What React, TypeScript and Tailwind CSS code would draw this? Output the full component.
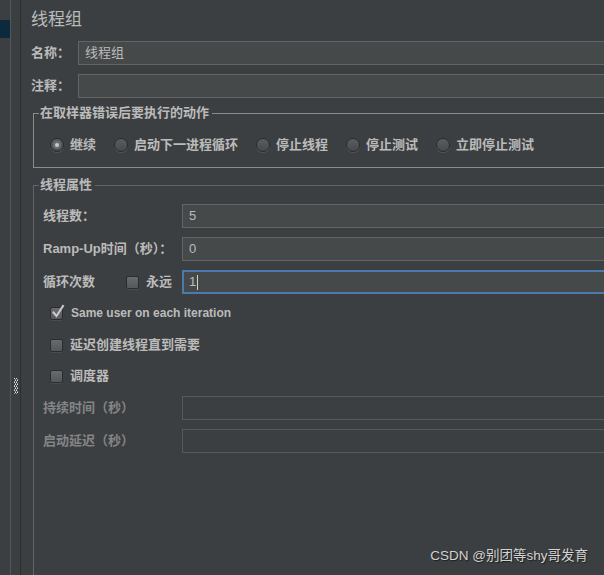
import React from 'react';

function Radio({ checked = false }: { checked?: boolean }) {
  return (
    <span className="w-[14px] h-[14px] rounded-full border border-[#2a2c2e] bg-linear-to-b from-[#5a5e61] to-[#474a4d] shadow-[0_1px_0_#55585a] flex items-center justify-center shrink-0">
      {checked && (
        <span className="w-[8px] h-[8px] rounded-full bg-[#6a6d6f] flex items-center justify-center">
          <span className="w-[4px] h-[4px] rounded-full bg-[#c8c8c8]" />
        </span>
      )}
    </span>
  );
}

function Check({ checked = false }: { checked?: boolean }) {
  return (
    <span className="relative w-[13px] h-[13px] rounded-[2px] border border-[#2a2c2e] bg-linear-to-b from-[#686b6e] to-[#55585b] shadow-[0_1px_0_#4a4d50] shrink-0">
      {checked && (
        <svg className="absolute -top-[4px] left-[0px]" width="14" height="15" viewBox="0 0 14 15">
          <path d="M2.5 8.5 L5.5 12 L12 2" stroke="#c9c9c9" strokeWidth="2" fill="none" strokeLinecap="square" />
        </svg>
      )}
    </span>
  );
}

function Field({ value, variant = 'normal' }: { value?: React.ReactNode; variant?: 'normal' | 'focused' | 'disabled' }) {
  const cls =
    variant === 'focused'
      ? 'border-2 border-[#4d7aad] bg-[#45494a] pl-[5px]'
      : variant === 'disabled'
        ? 'border border-[#57595b] bg-transparent pl-[6px]'
        : 'border border-[#646464] bg-[#45494a] pl-[6px]';
  return (
    <div className={`flex-1 -mr-[20px] h-[24px] flex items-center text-[13px] text-[#bbbbbb] ${cls}`}>
      {value}
    </div>
  );
}

function Group({ title, line, children, className = '' }: {
  title: string;
  line: string;
  children: React.ReactNode;
  className?: string;
}) {
  return (
    <div className={`flex flex-col -mr-[20px] ${className}`}>
      <div className="flex items-center h-[16px]">
        <span className={`self-end w-[6px] h-[8px] border-t border-l ${line}`} />
        <span className="px-[1px] text-[13px] leading-[16px] font-bold text-[#bbbbbb]">{title}</span>
        <span className={`flex-1 ml-[2px] border-t ${line}`} />
      </div>
      {children}
    </div>
  );
}

const RADIOS = ['继续', '启动下一进程循环', '停止线程', '停止测试', '立即停止测试'];

export default function App() {
  return (
    <div className='relative w-[604px] h-[575px] overflow-hidden bg-[#3c3f41] flex font-[family-name:"Liberation_Sans","Noto_Sans_CJK_SC",sans-serif]'>
      {/* Tree strip */}
      <div className="w-[11px] border-r border-[#55585a] shrink-0">
        <div className="mt-[20px] h-[18px] bg-[#0d293e]" />
      </div>

      {/* Splitter */}
      <div className="w-[10px] border-r border-[#2c2e30] shrink-0 pt-[378px] pl-[3px]">
        <svg width="4" height="16" viewBox="0 0 4 16">
          {Array.from({ length: 8 }).map((_, i) => (
            <g key={i}>
              <rect x={i % 2 ? 1 : 0} y={i * 2} width="1" height="1" fill="#e0e0e0" />
              <rect x={i % 2 ? 3 : 2} y={i * 2} width="1" height="1" fill="#e0e0e0" />
              <rect x={i % 2 ? 0 : 1} y={i * 2 + 1} width="1" height="1" fill="#9a9a9a" />
              <rect x={i % 2 ? 2 : 3} y={i * 2 + 1} width="1" height="1" fill="#9a9a9a" />
            </g>
          ))}
        </svg>
      </div>

      {/* Main panel */}
      <div className="flex-1 min-w-0 flex flex-col pl-[10px] pt-[10px] text-[#bbbbbb]">
        <h1 className="text-[17px] leading-[20px] font-normal">线程组</h1>

        <div className="mt-[11px] flex items-center h-[24px]">
          <span className="w-[47px] text-[13px] font-bold">名称：</span>
          <Field value="线程组" />
        </div>
        <div className="mt-[9px] flex items-center h-[24px]">
          <span className="w-[47px] text-[13px] font-bold">注释：</span>
          <Field />
        </div>

        <Group title="在取样器错误后要执行的动作" line="border-[#8c8c8c]" className="mt-[7px] ml-[2px]">
          <div className="border-l border-b border-[#8c8c8c] pt-[16px] pb-[14px] pl-[16px] flex items-center gap-[18px]">
            {RADIOS.map((r, i) => (
              <label key={r} className="flex items-center gap-[6px] h-[16px]">
                <Radio checked={i === 0} />
                <span className="text-[13px] font-bold whitespace-nowrap">{r}</span>
              </label>
            ))}
          </div>
        </Group>

        <Group title="线程属性" line="border-[#626568]" className="mt-[9px] ml-[2px] flex-1">
          <div className="flex-1 border-l border-[#626568] pl-[9px] pt-[11px] flex flex-col text-[13px]">
            <div className="flex items-center h-[24px]">
              <span className="w-[139px] font-bold">线程数：</span>
              <Field value="5" />
            </div>
            <div className="mt-[9px] flex items-center h-[24px]">
              <span className="w-[139px] font-bold">Ramp-Up时间（秒）：</span>
              <Field value="0" />
            </div>
            <div className="mt-[9px] flex items-center h-[24px]">
              <div className="w-[139px] flex items-center">
                <span className="w-[83px] font-bold">循环次数</span>
                <Check />
                <span className="ml-[7px] font-bold">永远</span>
              </div>
              <Field
                variant="focused"
                value={
                  <span className="flex items-center">
                    1<span className="ml-[1px] w-[1px] h-[15px] bg-[#d0d0d0]" />
                  </span>
                }
              />
            </div>

            <div className="mt-[9px] h-[20px] pl-[7px] flex items-center gap-[8px]">
              <Check checked />
              <span className="text-[12px] font-bold">Same user on each iteration</span>
            </div>
            <div className="mt-[12px] h-[20px] pl-[7px] flex items-center gap-[7px]">
              <Check />
              <span className="font-bold">延迟创建线程直到需要</span>
            </div>
            <div className="mt-[11px] h-[20px] pl-[7px] flex items-center gap-[7px]">
              <Check />
              <span className="font-bold">调度器</span>
            </div>

            <div className="mt-[10px] flex items-center h-[24px]">
              <span className="w-[139px] font-bold text-[#838587]">持续时间（秒）</span>
              <Field variant="disabled" />
            </div>
            <div className="mt-[9px] flex items-center h-[24px]">
              <span className="w-[139px] font-bold text-[#838587]">启动延迟（秒）</span>
              <Field variant="disabled" />
            </div>
          </div>
        </Group>
      </div>

      {/* Watermark */}
      <div className="absolute right-[16px] bottom-[10px] text-[13.5px] leading-[18px] text-[#d2d2d2] [text-shadow:1px_1px_1px_#1e1f20]">
        CSDN @别团等shy哥发育
      </div>
    </div>
  );
}
